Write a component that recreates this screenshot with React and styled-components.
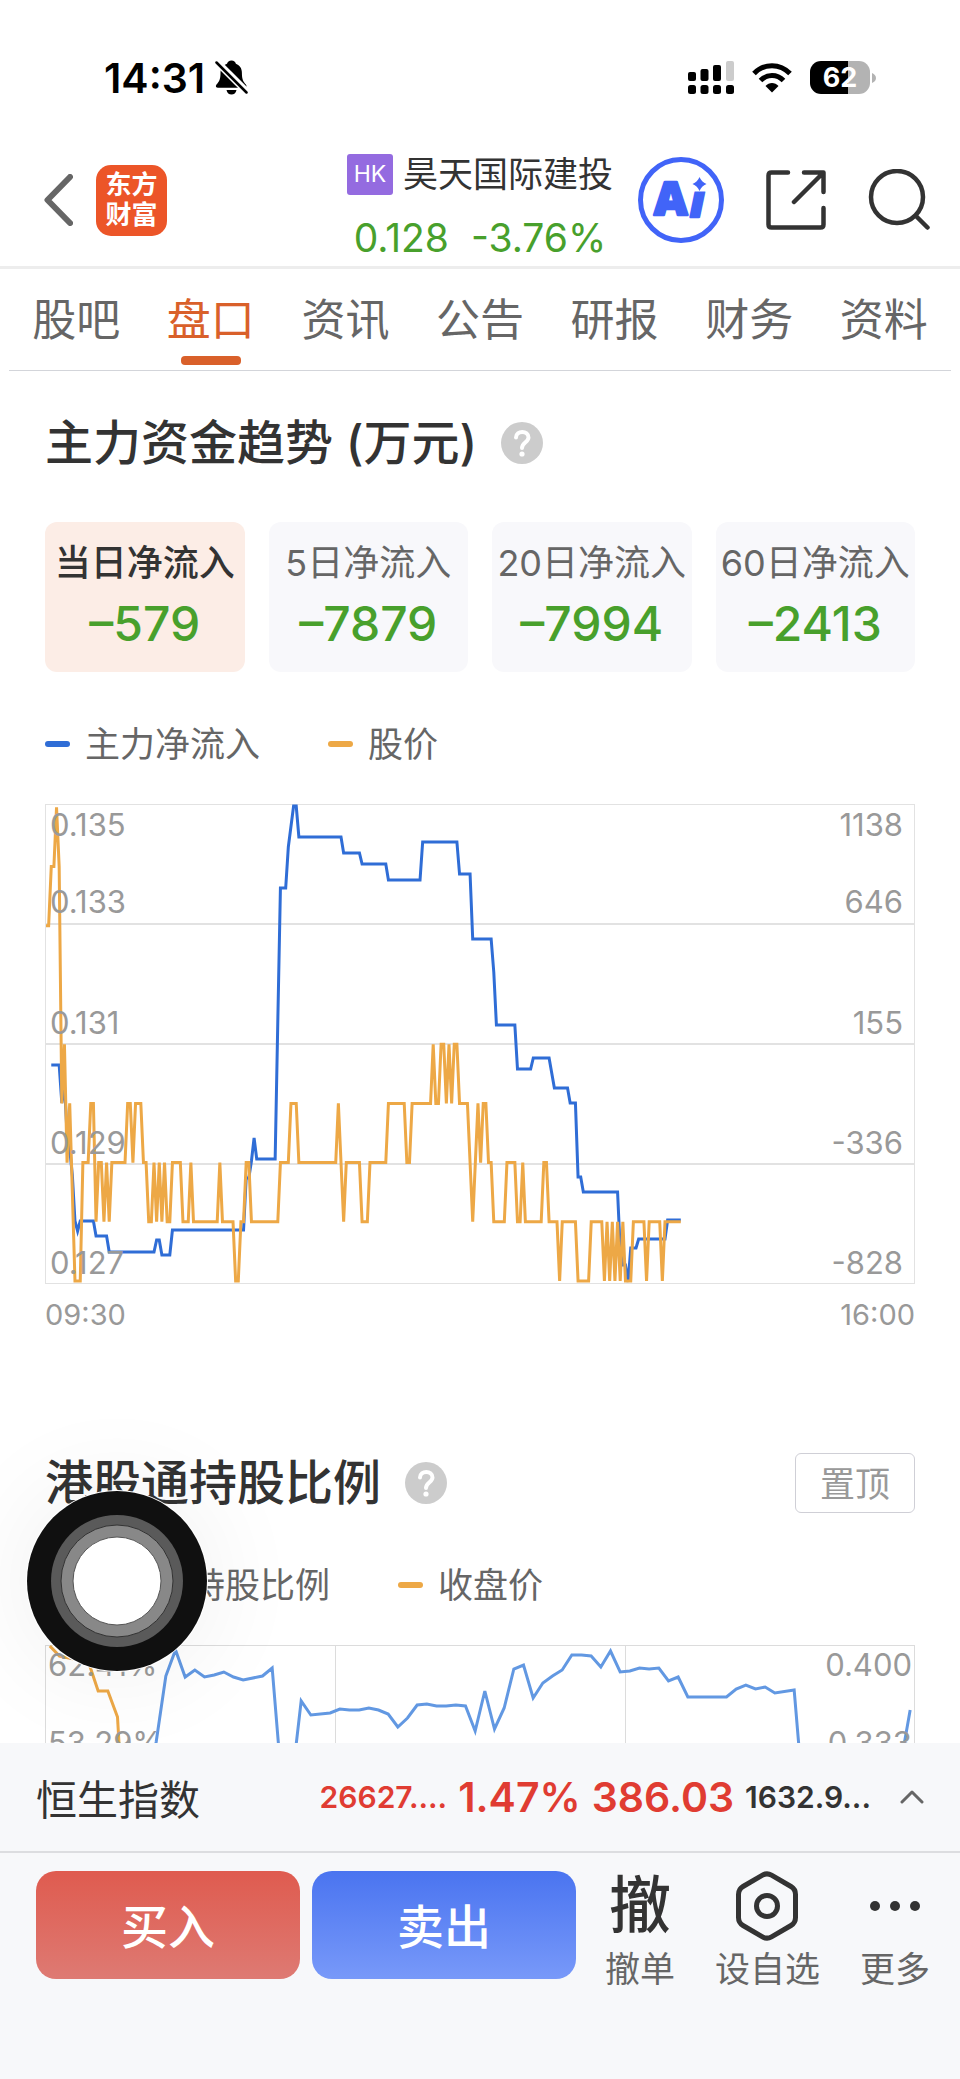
import React, { useState } from 'react'
import styled, { createGlobalStyle } from 'styled-components'

const GlobalStyle = createGlobalStyle`
  * {
    box-sizing: border-box;
  }

  body {
    margin: 0;
    background: #fff;
    color: #333;
    font-family: Inter, "Noto Sans CJK SC", sans-serif;
  }

  button {
    margin: 0;
    padding: 0;
    border: 0;
    background: none;
    color: inherit;
    font: inherit;
    cursor: pointer;
  }

  svg {
    display: block;
    flex: none;
  }
`

const Page = styled.div`
  display: flex;
  flex-direction: column;
  height: 100vh;
`

const StatusBar = styled.div`
  flex: none;
  display: flex;
  align-items: center;
  gap: 18px;
  padding: 60px 84px 39px 104px;
  color: #000;
`

const Clock = styled.div`
  display: flex;
  align-items: center;
  gap: 10px;
  margin-right: auto;
  font-size: 41px;
  font-weight: 600;
  line-height: 34px;
`

const Battery = styled.div`
  display: flex;
  align-items: center;
  gap: 2px;

  span {
    width: 60px;
    border-radius: 11px;
    background: linear-gradient(90deg, #000 63%, #b3b3b3 63%);
    color: #fff;
    font-size: 27px;
    font-weight: 700;
    line-height: 33px;
    text-align: center;
  }
`

const Header = styled.header`
  flex: none;
  display: grid;
  grid-template-columns: 1fr auto 1fr;
  align-items: center;
  padding: 0 30px;
  border-bottom: 3px solid #ededed;
`

const HeaderSide = styled.div`
  display: flex;
  align-items: center;
  justify-content: ${props => props.$end ? 'flex-end' : 'flex-start'};
  gap: ${props => props.$end ? '42px' : '23px'};
  padding-left: 14px;
`

const Logo = styled.a`
  display: grid;
  place-content: center;
  width: 71px;
  height: 71px;
  border-radius: 15px;
  background: #ec5528;
  color: #fff;
  font-size: 26px;
  font-weight: 700;
  line-height: 30px;
  text-align: center;
  text-decoration: none;
`

const Quote = styled.div`
  display: flex;
  flex-direction: column;
  align-items: center;
  gap: 21px;
  padding: 20px 0 6px;
`

const StockName = styled.div`
  display: flex;
  align-items: center;
  gap: 10px;
  font-size: 35px;
  line-height: 41px;
`

const Market = styled.span`
  width: 46px;
  border-radius: 3px;
  background: #946be0;
  color: #fff;
  font-size: 23px;
  text-align: center;
`

const Price = styled.div`
  display: flex;
  gap: 22px;
  color: #48a02c;
  font-size: 39px;
  line-height: 44px;
`

const Tabs = styled.nav`
  flex: none;
  display: flex;
  margin: 0 9px;
  border-bottom: 1px solid #d3d5da;
`

const Tab = styled.a`
  flex: 1;
  display: flex;
  flex-direction: column;
  align-items: center;
  gap: 6px;
  padding: 21px 0 5px;
  color: ${props => props.$active ? '#d9602a' : '#666'};
  font-size: 44px;
  line-height: 60px;
  text-decoration: none;

  i {
    width: 60px;
    height: 9px;
    border-radius: 4px;
    background: ${props => props.$active ? '#d9602a' : 'transparent'};
  }
`

const Content = styled.main`
  flex: 1;
  min-height: 0;
  overflow: hidden;
`

const Section = styled.section`
  padding: 42px 45px 0;
`

const TitleRow = styled.div`
  display: flex;
  align-items: center;
  gap: 24px;

  h2 {
    margin: 0;
    font-size: 48px;
    font-weight: 500;
    line-height: 60px;
  }
`

const PinButton = styled.button`
  margin-left: auto;
  padding-bottom: 4px;
  width: 120px;
  height: 60px;
  border: 1px solid #cfcfd6;
  border-radius: 6px;
  color: #999;
  font-size: 35px;
`

const Chips = styled.div`
  display: grid;
  grid-template-columns: repeat(4, 1fr);
  gap: 24px;
  margin-top: 49px;
`

const Chip = styled.button`
  display: flex;
  flex-direction: column;
  align-items: center;
  gap: 11px;
  padding: 19px 0 20px;
  border-radius: 12px;
  background: ${props => props.$active ? '#fcede6' : '#f8f8fb'};
  color: ${props => props.$active ? '#333' : '#666'};
  font-size: 36px;
  font-weight: ${props => props.$active ? 500 : 400};
  line-height: 44px;
  white-space: nowrap;

  strong {
    color: #48a02c;
    font-size: 48px;
    font-weight: 500;
    line-height: 56px;
  }
`

const Legend = styled.div`
  display: flex;
  gap: 68px;
  margin: 50px 0 38px;
  color: #666;
  font-size: 35px;
  line-height: 44px;
`

const LegendItem = styled.span`
  display: flex;
  align-items: center;
  gap: 15px;

  i {
    width: 25px;
    height: 6px;
    border-radius: 3px;
    background: ${props => props.$color};
  }
`

const ChartSvg = styled.svg`
  width: 100%;
  height: auto;

  text {
    fill: #999;
    font-size: 31px;
  }

  polyline {
    fill: none;
    stroke-width: 3;
  }
`

const Axis = styled.div`
  display: flex;
  justify-content: space-between;
  margin-top: 11px;
  color: #999;
  font-size: 29px;
  line-height: 40px;
`

const PinnedSection = styled(Section)`
  padding-top: 118px;
`

const Footer = styled.footer`
  flex: none;
  background: #f7f8fa;
`

const IndexBar = styled.div`
  display: flex;
  align-items: center;
  gap: 11px;
  height: 110px;
  padding: 0 36px;
  border-bottom: 2px solid #dcdde0;

  > span {
    margin-right: auto;
    font-size: 41px;
  }
`

const IndexValue = styled.b`
  color: ${props => props.$up ? '#e03c32' : '#333'};
  font-size: ${props => props.$small ? '30px' : '41px'};
  font-weight: 600;
`

const Actions = styled.div`
  display: flex;
  align-items: flex-start;
  gap: 12px;
  padding: 18px 30px 88px 36px;
`

const TradeButton = styled.button`
  flex: 1;
  padding-bottom: 4px;
  height: 108px;
  border-radius: 20px;
  background: ${props => props.$sell
    ? 'linear-gradient(#4a74f0, #7899f9)'
    : 'linear-gradient(#df5b4f, #de7a73)'};
  color: #fff;
  font-size: 47px;
  font-weight: 500;
`

const ActionGroup = styled.div`
  display: flex;
  gap: 40px;
  margin-left: 17px;
`

const Action = styled.button`
  display: flex;
  flex-direction: column;
  align-items: center;
  gap: 6px;
  color: #666;
  font-size: 35px;
  line-height: 44px;
`

const ActionIcon = styled.span`
  display: flex;
  align-items: center;
  height: 70px;
  color: #333;
  font-size: 62px;
  font-weight: 500;
`

const FloatingButton = styled.button`
  position: fixed;
  left: 27px;
  bottom: 408px;
  display: grid;
  place-items: center;
  width: 180px;
  height: 180px;
  border-radius: 50%;
  background: #101010;
  box-shadow: 0 0 0 1px #fff, 0 0 110px rgba(0, 0, 0, 0.07);
`

const BLUE = '#2f6dd6'
const ORANGE = '#eda846'

const tabs = ['股吧', '盘口', '资讯', '公告', '研报', '财务', '资料']

const periods = [
  { label: '当日净流入', value: '–579' },
  { label: '5日净流入', value: '–7879' },
  { label: '20日净流入', value: '–7994' },
  { label: '60日净流入', value: '–2413' }
]

// [minute, ticks above 0.127]
const prices = [
  [0, 6], [1, 6], [2, 7], [3, 7], [4, 8], [5, 7], [6, 3], [7, 4], [8, 2], [9, 3], [11, 0], [13, 0],
  [14, 2], [16, 2], [17, 3], [18, 3], [19, 1], [20, 2], [21, 2], [22, 1], [23, 2], [24, 1], [25, 2],
  [30, 2], [31, 3], [32, 3], [33, 2], [34, 3], [36, 3], [37, 2], [38, 2], [39, 1], [40, 1], [41, 2],
  [42, 1], [43, 2], [44, 1], [45, 2], [46, 1], [47, 1], [48, 2], [51, 2], [52, 1], [54, 1], [55, 2],
  [56, 1], [65, 1], [66, 2], [67, 1], [71, 1], [72, 0], [73, 0], [74, 1], [75, 1], [76, 2], [77, 2],
  [78, 1], [88, 1], [89, 2], [92, 2], [93, 3], [95, 3], [96, 2], [110, 2], [111, 3], [113, 1],
  [114, 2], [119, 2], [120, 1], [122, 1], [123, 2], [129, 2], [130, 3], [136, 3], [137, 2], [138, 2],
  [139, 3], [146, 3], [147, 4], [148, 3], [149, 3], [150, 4], [151, 4], [152, 3], [153, 4], [154, 3],
  [155, 4], [156, 4], [157, 3], [160, 3], [162, 1], [164, 3], [165, 2], [166, 3], [167, 3], [168, 2],
  [169, 2], [170, 1], [174, 1], [175, 2], [178, 2], [179, 1], [180, 1], [181, 2], [182, 1], [188, 1],
  [189, 2], [190, 2], [191, 1], [194, 1], [195, 0], [196, 1], [201, 1], [202, 0], [206, 0], [207, 1],
  [211, 1], [212, 0], [213, 1], [214, 0], [215, 1], [216, 0], [217, 1], [218, 0], [219, 1], [220, 0],
  [222, 0], [223, 1], [227, 1], [228, 0], [229, 1], [233, 1], [234, 0], [235, 1], [241, 1]
]

// [minute, height on the chart]
const inflow = [
  [2, 261], [5, 261], [6, 299], [7, 280], [8, 330], [9, 345], [10, 371], [11, 417], [12, 427],
  [13, 417], [18, 417], [19, 432], [23, 432], [24, 448], [41, 448], [42, 436], [43, 436], [44, 451],
  [47, 451], [48, 426], [75, 426], [76, 374], [77, 374], [78, 357], [79, 334], [80, 355], [87, 355],
  [88, 218], [89, 84], [91, 84], [92, 43], [94, 2], [95, 2], [96, 33], [112, 33], [113, 49],
  [119, 49], [120, 60], [129, 60], [130, 76], [142, 76], [143, 38], [156, 38], [157, 70], [161, 70],
  [162, 135], [169, 135], [170, 168], [171, 221], [178, 221], [179, 265], [184, 265], [185, 254],
  [191, 254], [193, 284], [198, 284], [199, 299], [201, 299], [202, 373], [203, 373], [204, 388],
  [217, 388], [218, 446], [219, 461], [220, 461], [221, 478], [222, 444], [224, 444], [225, 435],
  [235, 435], [236, 416], [241, 416]
]

// [trading day, height on the chart]
const holding = [
  [10, 150], [11, 97], [12, 31], [13, 5], [14, 32], [15, 25], [16, 32], [17, 30], [18, 27], [19, 32],
  [20, 35], [22, 31], [23, 23], [24, 140], [25, 140], [26, 56], [27, 70], [29, 68], [30, 64],
  [31, 65], [32, 65], [33, 63], [34, 65], [35, 69], [36, 82], [37, 73], [38, 60], [39, 59], [40, 61],
  [41, 61], [42, 60], [43, 61], [44, 86], [45, 46], [46, 84], [47, 63], [48, 24], [49, 20], [50, 53],
  [51, 38], [52, 31], [53, 25], [54, 10], [55, 10], [56, 11], [57, 22], [58, 6], [59, 27], [60, 26],
  [61, 23], [62, 24], [63, 23], [64, 36], [65, 32], [66, 52], [70, 52], [71, 44], [72, 40], [73, 44],
  [74, 42], [75, 48], [77, 45], [78, 160], [88, 120], [89, 65]
]

const closing = [[0, 1], [1, 11], [4, 17], [5, 46], [6, 46], [7, 72], [8, 240]]

const minuteX = (m) => 1 + m * 2.634
const dayX = (d) => (d + 0.5) * 870 / 90

const toPoints = (data, x, y = (v) => v) => data.map(([a, b]) => `${x(a)},${y(b)}`).join(' ')

const Help = () => (
  <svg width='42' height='42' viewBox='0 0 42 42' role='img' aria-label='说明'>
    <circle cx='21' cy='21' r='21' fill='#ccc' />
    <path d='M15 15.500c0-7.500 12.500-7.500 12.500 0c0 4.500-6.500 5-6.500 10.500' fill='none' stroke='#fff' strokeWidth='4' strokeLinecap='round' />
    <circle cx='21' cy='32' r='2.600' fill='#fff' />
  </svg>
)

const TrendChart = () => (
  <ChartSvg viewBox='0 0 870 480' role='img' aria-label='主力资金趋势'>
    <rect x='0.5' y='0.5' width='869' height='479' fill='none' stroke='#e2e2e2' />
    <path d='M0 120h870M0 240h870M0 360h870' stroke='#e2e2e2' strokeWidth='2' />
    <polyline points={toPoints(inflow, minuteX)} stroke={BLUE} />
    <polyline points={toPoints(prices, minuteX, (v) => 477 - v * 59.2)} stroke={ORANGE} />
    {['0.135', '0.133', '0.131', '0.129', '0.127'].map((label, i) => (
      <text key={label} x='5' y={[32, 109, 230, 350, 470][i]}>{label}</text>
    ))}
    {['1138', '646', '155', '-336', '-828'].map((label, i) => (
      <text key={label} x='858' y={[32, 109, 230, 350, 470][i]} textAnchor='end'>{label}</text>
    ))}
  </ChartSvg>
)

const HoldingChart = () => (
  <ChartSvg viewBox='0 0 870 480' role='img' aria-label='港股通持股比例'>
    <rect x='0.5' y='0.5' width='869' height='479' fill='none' stroke='#dcdcdc' />
    <path d='M290.500 0v480M580.500 0v480' stroke='#dcdcdc' />
    <polyline points={toPoints(holding, dayX)} stroke='#6298e2' />
    <polyline points={toPoints(closing, dayX)} stroke={ORANGE} />
    <text x='3' y='31'>62.41%</text>
    <text x='3' y='109'>53.29%</text>
    <text x='867' y='31' textAnchor='end'>0.400</text>
    <text x='867' y='109' textAnchor='end'>0.333</text>
  </ChartSvg>
)

const App = () => {
  const [tab, setTab] = useState('盘口')
  const [period, setPeriod] = useState('当日净流入')

  return (
    <Page>
      <GlobalStyle />
      <StatusBar>
        <Clock>
          14:31
          <svg width='33' height='35' viewBox='0 0 33 35'>
            <path d='M16.500 0.500c2.500 0 4 1.500 4.400 3.200c4 1.500 6 5 6 9.300c0 6 1.300 8.500 4 11.500c1.300 1.500 0.500 3.300-1.500 3.300H3c-2 0-2.800-1.800-1.500-3.300c2.700-3 4-5.500 4-11.500c0-4.300 2-7.800 6.500-9.300c0.500-1.700 2-3.200 4.500-3.200zM11.500 30h10c-0.600 3-2.500 4.500-5 4.500s-4.400-1.500-5-4.500z' />
            <path d='M0 0L34 34' stroke='#fff' strokeWidth='7' />
            <path d='M1.500 2.500L31.500 32.500' stroke='#000' strokeWidth='2.500' strokeLinecap='round' />
          </svg>
        </Clock>
        <svg width='46' height='34' viewBox='0 0 46 34'>
          <rect x='0' y='11' width='8' height='9' rx='2' />
          <rect x='12.500' y='8' width='8' height='12' rx='2' />
          <rect x='25' y='4' width='8' height='16' rx='2' />
          <rect x='38' y='0' width='8' height='20' rx='2' fill='#ccc' />
          <rect x='0' y='24' width='8' height='9' rx='2.500' />
          <rect x='12.500' y='24' width='8' height='9' rx='2.500' />
          <rect x='25' y='24' width='8' height='9' rx='2.500' />
          <rect x='38' y='24' width='8' height='9' rx='2.500' />
        </svg>
        <svg width='40' height='30' viewBox='0 0 40 30'>
          <path d='M2 10.500C12 0 28 0 38 10.500' fill='none' stroke='#000' strokeWidth='5' />
          <path d='M8.500 17.500C15 10.800 25 10.800 31.500 17.500' fill='none' stroke='#000' strokeWidth='5' />
          <path d='M13.500 23C17 19 23 19 26.500 23L20 29.500z' />
        </svg>
        <Battery>
          <span>62</span>
          <svg width='4' height='10' viewBox='0 0 4 10'>
            <path d='M0 0c5.300 2 5.300 8 0 10z' fill='#b3b3b3' />
          </svg>
        </Battery>
      </StatusBar>

      <Header>
        <HeaderSide>
          <button aria-label='返回'>
            <svg width='29' height='52' viewBox='0 0 29 52' fill='none' stroke='#666' strokeWidth='6' strokeLinecap='round'>
              <path d='M26 3L3.500 26L26 49' strokeLinejoin='round' />
            </svg>
          </button>
          <Logo href='#home'>东方<br />财富</Logo>
        </HeaderSide>
        <Quote>
          <StockName><Market>HK</Market>昊天国际建投</StockName>
          <Price><span>0.128</span><span>-3.76%</span></Price>
        </Quote>
        <HeaderSide $end>
          <button aria-label='Ai'>
            <svg width='86' height='86' viewBox='0 0 86 86'>
              <circle cx='43' cy='43' r='40.500' fill='none' stroke='#4164f8' strokeWidth='5' />
              <g fill='#4164f8' stroke='#4164f8' strokeWidth='2.500' strokeLinejoin='round'>
                <text x='16' y='58' fontFamily='Open Sans' fontWeight='800' fontSize='46'>A</text>
                <text x='52' y='60' fontFamily='Open Sans' fontWeight='800' fontStyle='italic' fontSize='44'>i</text>
              </g>
              <path d='M52 20h18v14.500H52z' fill='#fff' />
              <path d='M61.500 20q2 5 7 7q-5 2-7 7q-2-5-7-7q5-2 7-7z' fill='#4164f8' />
            </svg>
          </button>
          <button aria-label='分享'>
            <svg width='60' height='60' viewBox='0 0 60 60' fill='none' stroke='#333' strokeWidth='4.500' strokeLinecap='round' strokeLinejoin='round'>
              <path d='M22 2.500H5.500Q2.500 2.500 2.500 5.500V54.500Q2.500 57.500 5.500 57.500H54.500Q57.500 57.500 57.500 54.500V38' />
              <path d='M38 2.500H57.500V22M57 3L28 32' />
            </svg>
          </button>
          <button aria-label='搜索'>
            <svg width='62' height='62' viewBox='0 0 62 62' fill='none' stroke='#333' strokeWidth='4.500' strokeLinecap='round'>
              <circle cx='29' cy='28' r='26' />
              <path d='M48 47L59.500 58.500' />
            </svg>
          </button>
        </HeaderSide>
      </Header>

      <Tabs>
        {tabs.map((name) => (
          <Tab key={name} href={`#${name}`} $active={name === tab} onClick={() => setTab(name)}>
            {name}
            <i />
          </Tab>
        ))}
      </Tabs>

      <Content>
        <Section>
          <TitleRow>
            <h2>主力资金趋势 (万元)</h2>
            <Help />
          </TitleRow>
          <Chips>
            {periods.map(({ label, value }) => (
              <Chip key={label} $active={label === period} onClick={() => setPeriod(label)}>
                {label}
                <strong>{value}</strong>
              </Chip>
            ))}
          </Chips>
          <Legend>
            <LegendItem $color={BLUE}><i />主力净流入</LegendItem>
            <LegendItem $color={ORANGE}><i />股价</LegendItem>
          </Legend>
          <TrendChart />
          <Axis><span>09:30</span><span>16:00</span></Axis>
        </Section>

        <PinnedSection>
          <TitleRow>
            <h2>港股通持股比例</h2>
            <Help />
            <PinButton>置顶</PinButton>
          </TitleRow>
          <Legend>
            <LegendItem $color={BLUE}><i />港股通持股比例</LegendItem>
            <LegendItem $color={ORANGE}><i />收盘价</LegendItem>
          </Legend>
          <HoldingChart />
        </PinnedSection>
      </Content>

      <Footer>
        <IndexBar>
          <span>恒生指数</span>
          <IndexValue $up $small>26627....</IndexValue>
          <IndexValue $up>1.47%</IndexValue>
          <IndexValue $up>386.03</IndexValue>
          <IndexValue $small>1632.9...</IndexValue>
          <button aria-label='展开'>
            <svg width='42' height='14' viewBox='0 0 42 14' fill='none' stroke='#666' strokeWidth='3' strokeLinecap='round' strokeLinejoin='round'>
              <path d='M20 12L30 2L40 12' />
            </svg>
          </button>
        </IndexBar>
        <Actions>
          <TradeButton>买入</TradeButton>
          <TradeButton $sell>卖出</TradeButton>
          <ActionGroup>
            <Action><ActionIcon>撤</ActionIcon>撤单</Action>
            <Action>
              <ActionIcon>
                <svg width='64' height='70' viewBox='0 0 64 70' fill='none' stroke='#333' strokeWidth='5'>
                  <path d='M27.500 4.200Q32 1.500 36.500 4.200L56 15.500Q60.500 18.200 60.500 23.500V46.500Q60.500 51.800 56 54.500L36.500 65.800Q32 68.500 27.500 65.800L8 54.500Q3.500 51.800 3.500 46.500V23.500Q3.500 18.200 8 15.500z' />
                  <circle cx='32' cy='35' r='10.500' />
                </svg>
              </ActionIcon>
              设自选
            </Action>
            <Action>
              <ActionIcon>
                <svg width='50' height='10' viewBox='0 0 50 10' fill='#333'>
                  <circle cx='5' cy='5' r='5' />
                  <circle cx='25' cy='5' r='5' />
                  <circle cx='45' cy='5' r='5' />
                </svg>
              </ActionIcon>
              更多
            </Action>
          </ActionGroup>
        </Actions>
      </Footer>

      <FloatingButton aria-label='辅助触控'>
        <svg width='134' height='134' viewBox='0 0 134 134'>
          <circle cx='67' cy='67' r='66' fill='#5a5a5a' />
          <circle cx='67' cy='67' r='56' fill='#888' stroke='#333' strokeWidth='1' />
          <circle cx='67' cy='67' r='44' fill='#fff' stroke='#555' strokeWidth='1' />
        </svg>
      </FloatingButton>
    </Page>
  )
}

export default App
